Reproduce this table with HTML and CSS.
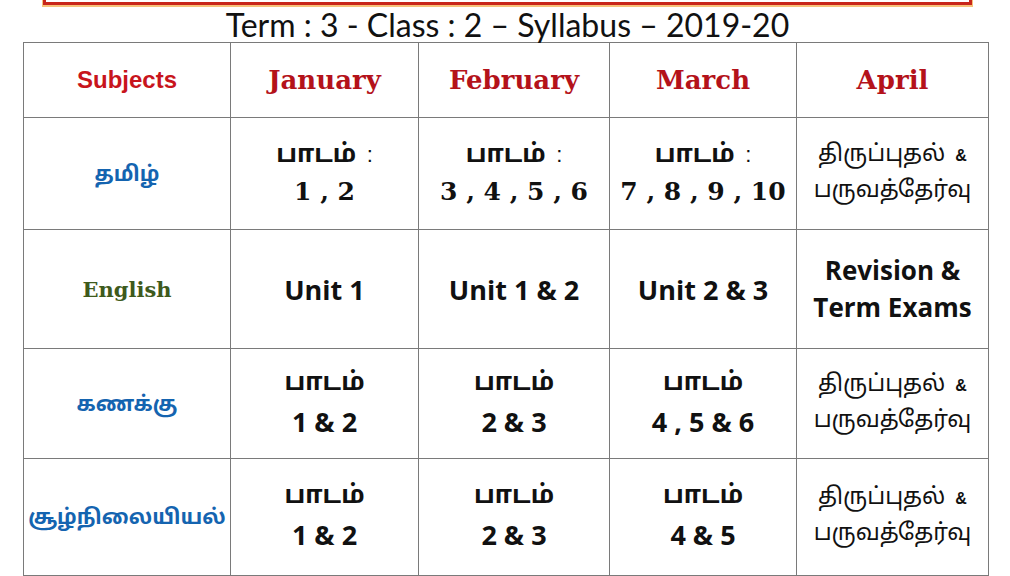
FILE: index.html
```html
<!DOCTYPE html>
<html lang="ta">
<head>
<meta charset="utf-8">
<title>Term 3 - Class 2 - Syllabus 2019-20</title>
<link rel="stylesheet" href="styles.css">
</head>
<body>
<div class="banner"></div>
<h1 class="title"><span class="title-text">Term : 3 - Class : 2 &ndash; Syllabus &ndash; 2019-20</span></h1>
<table class="syllabus">
  <colgroup>
    <col class="c-sub"><col class="c-jan"><col class="c-feb"><col class="c-mar"><col class="c-apr">
  </colgroup>
  <tr class="r-head">
    <th class="subj-head">Subjects</th>
    <th class="month">January</th>
    <th class="month">February</th>
    <th class="month">March</th>
    <th class="month">April</th>
  </tr>
  <tr class="r-tamil">
    <td class="subj ta">தமிழ்</td>
    <td><span class="ta-line">பாடம் <span class="colon">:</span></span><span class="num">1 , 2</span></td>
    <td><span class="ta-line">பாடம் <span class="colon">:</span></span><span class="num">3 , 4 , 5 , 6</span></td>
    <td><span class="ta-line">பாடம் <span class="colon">:</span></span><span class="num">7 , 8 , 9 , 10</span></td>
    <td class="rev"><span class="ta-sm">திருப்புதல் <span class="amp">&amp;</span></span><span class="ta-sm">பருவத்தேர்வு</span></td>
  </tr>
  <tr class="r-eng">
    <td class="subj en">English</td>
    <td class="unit">Unit 1</td>
    <td class="unit">Unit 1 &amp; 2</td>
    <td class="unit">Unit 2 &amp; 3</td>
    <td class="unit two">Revision &amp;<br>Term Exams</td>
  </tr>
  <tr class="r-math">
    <td class="subj ta">கணக்கு</td>
    <td><span class="ta-line">பாடம்</span><span class="unit-num">1 &amp; 2</span></td>
    <td><span class="ta-line">பாடம்</span><span class="unit-num">2 &amp; 3</span></td>
    <td><span class="ta-line">பாடம்</span><span class="unit-num">4 , 5 &amp; 6</span></td>
    <td class="rev"><span class="ta-sm">திருப்புதல் <span class="amp">&amp;</span></span><span class="ta-sm">பருவத்தேர்வு</span></td>
  </tr>
  <tr class="r-env">
    <td class="subj ta">சூழ்நிலையியல்</td>
    <td><span class="ta-line">பாடம்</span><span class="unit-num">1 &amp; 2</span></td>
    <td><span class="ta-line">பாடம்</span><span class="unit-num">2 &amp; 3</span></td>
    <td><span class="ta-line">பாடம்</span><span class="unit-num">4 &amp; 5</span></td>
    <td class="rev"><span class="ta-sm">திருப்புதல் <span class="amp">&amp;</span></span><span class="ta-sm">பருவத்தேர்வு</span></td>
  </tr>
</table>
</body>
</html>
```
FILE: styles.css
```css
html, body {
  margin: 0;
  padding: 0;
  background: #ffffff;
}
body {
  width: 1010px;
  height: 576px;
  overflow: hidden;
  font-family: "Noto Sans Tamil", "Lohit Tamil", "Noto Sans", sans-serif;
  color: #111;
}
.banner {
  margin: 0 38px 0 43px;
  height: 2px;
  border: 3px solid #c8261a;
  border-top: none;
  box-shadow: 0 1px 0 1px #f6c27a;
}
.title {
  margin: 2px 0 0 0;
  height: 35px;
  text-align: center;
  font-family: "Lato", "Liberation Sans", sans-serif;
  font-weight: normal;
  font-size: 33px;
  line-height: 35px;
  color: #111;
  padding-left: 4px;
}
.title-text {
  display: inline-block;
  transform: scaleX(0.97);
  transform-origin: center;
  white-space: nowrap;
}
.syllabus {
  margin-left: 23px;
  border-collapse: collapse;
  table-layout: fixed;
  width: 965px;
}
.c-sub { width: 207px; }
.c-jan { width: 188px; }
.c-feb { width: 191px; }
.c-mar { width: 187px; }
.c-apr { width: 192px; }
.syllabus th, .syllabus td {
  border: 1px solid #7a7a7a;
  text-align: center;
  vertical-align: middle;
  padding: 0;
}
.r-head { height: 75px; }
.r-tamil { height: 112px; }
.r-eng { height: 119px; }
.r-math { height: 110px; }
.r-env { height: 117px; }
.subj-head {
  font-family: "Liberation Sans", Arial, sans-serif;
  font-weight: bold;
  font-size: 24px;
  color: #c8141c;
  padding-top: 2px;
}
.month {
  font-family: "DejaVu Serif", "Liberation Serif", serif;
  font-weight: bold;
  font-size: 26px;
  color: #b4121a;
  padding-top: 2px;
}
.subj {
  font-weight: bold;
}
.subj.ta {
  font-family: "Noto Sans Tamil", "Lohit Tamil", "Noto Sans", sans-serif;
  font-size: 21px;
  color: #1464b0;
  padding-top: 4px;
}
.subj.en {
  font-family: "DejaVu Serif", "Liberation Serif", serif;
  font-size: 21px;
  color: #3e5a1c;
}
.ta-line {
  display: block;
  font-size: 25px;
  font-weight: bold;
  line-height: 36px;
}
.colon {
  font-family: "Liberation Sans", sans-serif;
  font-weight: normal;
  font-size: 22px;
  margin-left: 4px;
}
.num {
  display: block;
  font-family: "DejaVu Serif", "Liberation Serif", serif;
  font-weight: bold;
  font-size: 25px;
  line-height: 36px;
}
.unit-num {
  display: block;
  font-family: "Open Sans", "Liberation Sans", sans-serif;
  font-weight: bold;
  font-size: 27px;
  line-height: 40px;
}
.unit {
  font-family: "Open Sans", "Liberation Sans", sans-serif;
  font-weight: bold;
  font-size: 27px;
  line-height: 37px;
}
.unit.two {
  font-size: 26px;
}
.rev .ta-sm {
  display: block;
  font-size: 23px;
  line-height: 36px;
}
.amp {
  font-family: "Liberation Sans", sans-serif;
  font-weight: bold;
  font-size: 16px;
  margin-left: 4px;
}
```
